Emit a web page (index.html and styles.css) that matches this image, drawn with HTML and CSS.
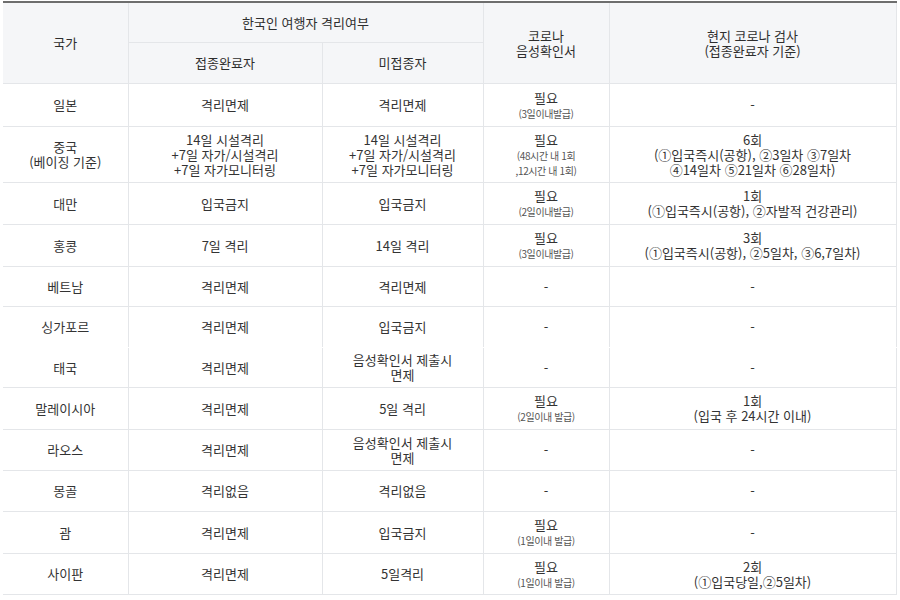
FILE: index.html
```html
<!DOCTYPE html>
<html lang="ko">
<head>
<meta charset="utf-8">
<title>해외 입국 격리 현황</title>
<link rel="stylesheet" href="styles.css">
</head>
<body>
<table class="tbl">
  <colgroup>
    <col class="c1"><col class="c2"><col class="c3"><col class="c4"><col class="c5">
  </colgroup>
  <thead>
    <tr class="h1">
      <th rowspan="2">국가</th>
      <th colspan="2">한국인 여행자 격리여부</th>
      <th rowspan="2">코로나<br>음성확인서</th>
      <th rowspan="2">현지 코로나 검사<br>(접종완료자 기준)</th>
    </tr>
    <tr class="h2">
      <th>접종완료자</th>
      <th>미접종자</th>
    </tr>
  </thead>
  <tbody>
    <tr class="r43">
      <td>일본</td><td>격리면제</td><td>격리면제</td>
      <td>필요<br><span class="sm">(3일이내발급)</span></td><td>-</td>
    </tr>
    <tr class="r56">
      <td>중국<br>(베이징 기준)</td>
      <td>14일 시설격리<br>+7일 자가/시설격리<br>+7일 자가모니터링</td>
      <td>14일 시설격리<br>+7일 자가/시설격리<br>+7일 자가모니터링</td>
      <td>필요<br><span class="sm">(48시간 내 1회<br>,12시간 내 1회)</span></td>
      <td>6회<br>(①입국즉시(공항), ②3일차 ③7일차<br>④14일차 ⑤21일차 ⑥28일차)</td>
    </tr>
    <tr class="r42">
      <td>대만</td><td>입국금지</td><td>입국금지</td>
      <td>필요<br><span class="sm">(2일이내발급)</span></td>
      <td>1회<br>(①입국즉시(공항), ②자발적 건강관리)</td>
    </tr>
    <tr class="r42">
      <td>홍콩</td><td>7일 격리</td><td>14일 격리</td>
      <td>필요<br><span class="sm">(3일이내발급)</span></td>
      <td>3회<br>(①입국즉시(공항), ②5일차, ③6,7일차)</td>
    </tr>
    <tr class="r40">
      <td>베트남</td><td>격리면제</td><td>격리면제</td><td>-</td><td>-</td>
    </tr>
    <tr class="r41 nob">
      <td>싱가포르</td><td>격리면제</td><td>입국금지</td><td>-</td><td>-</td>
    </tr>
    <tr class="r40">
      <td>태국</td><td>격리면제</td><td>음성확인서 제출시<br>면제</td><td>-</td><td>-</td>
    </tr>
    <tr class="r42">
      <td>말레이시아</td><td>격리면제</td><td>5일 격리</td>
      <td>필요<br><span class="sm">(2일이내 발급)</span></td>
      <td>1회<br>(입국 후 24시간 이내)</td>
    </tr>
    <tr class="r41">
      <td>라오스</td><td>격리면제</td><td>음성확인서 제출시<br>면제</td><td>-</td><td>-</td>
    </tr>
    <tr class="r41">
      <td>몽골</td><td>격리없음</td><td>격리없음</td><td>-</td><td>-</td>
    </tr>
    <tr class="r42">
      <td>괌</td><td>격리면제</td><td>입국금지</td>
      <td>필요<br><span class="sm">(1일이내 발급)</span></td><td>-</td>
    </tr>
    <tr class="r41">
      <td>사이판</td><td>격리면제</td><td>5일격리</td>
      <td>필요<br><span class="sm">(1일이내 발급)</span></td>
      <td>2회<br>(①입국당일,②5일차)</td>
    </tr>
  </tbody>
</table>
</body>
</html>
```
FILE: styles.css
```css
html, body {
  margin: 0;
  padding: 0;
  background: #ffffff;
}
body {
  padding: 1px 0 0 3px;
  font-family: "Noto Sans CJK KR", "Noto Sans", sans-serif;
  color: #333333;
}
.tbl {
  width: 893px;
  table-layout: fixed;
  border-collapse: collapse;
  border-top: 2px solid #6e6e6e;
  font-size: 13px;
  line-height: 15px;
  text-align: center;
}
.c1 { width: 125px; }
.c2 { width: 194px; }
.c3 { width: 161px; }
.c4 { width: 126px; }
.c5 { width: 287px; }
th, td {
  padding: 0 2px;
  border: 1px solid #e4e6e9;
  vertical-align: middle;
  text-align: center;
}
th:first-child, td:first-child {
  border-left: none;
}
th {
  background: #f5f6f8;
  font-weight: normal;
  color: #2e2e2e;
}
.h1 { height: 40px; }
.h2 { height: 41px; }
.r40 { height: 40px; }
.r41 { height: 41px; }
.r42 { height: 42px; }
.r43 { height: 43px; }
.r56 { height: 56px; }
.nob td { border-bottom-color: #ffffff; }
.sm {
  font-size: 10px;
  line-height: 13px;
  letter-spacing: -0.4px;
  color: #555;
}
```
